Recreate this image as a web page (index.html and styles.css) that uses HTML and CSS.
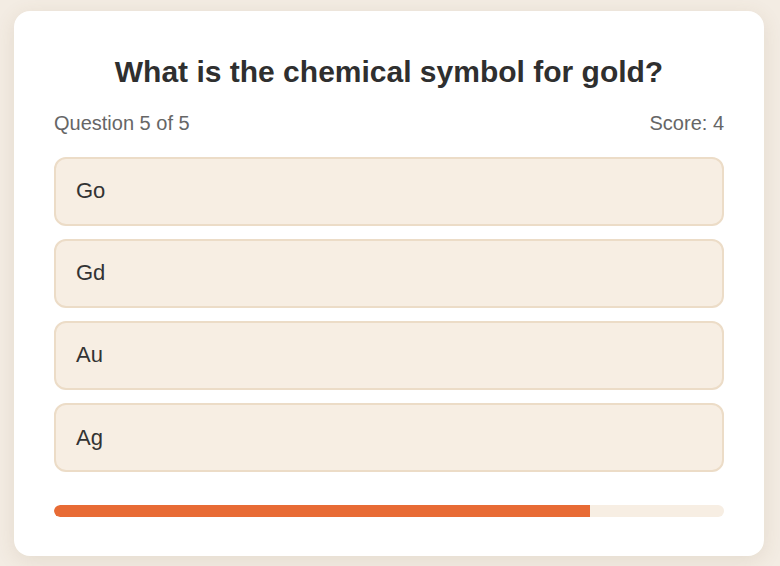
FILE: index.html
```html
<!DOCTYPE html>
<html lang="en">
<head>
<meta charset="utf-8">
<title>Quiz</title>
<link rel="stylesheet" href="styles.css">
</head>
<body>
<main class="card">
  <h1 class="question">What is the chemical symbol for gold?</h1>
  <div class="meta">
    <span>Question 5 of 5</span>
    <span>Score: 4</span>
  </div>
  <div class="options">
    <button class="option">Go</button>
    <button class="option">Gd</button>
    <button class="option">Au</button>
    <button class="option">Ag</button>
  </div>
  <div class="progress"><div class="progress-fill" style="width: 80%"></div></div>
</main>
</body>
</html>
```
FILE: styles.css
```css
* { box-sizing: border-box; }
body {
  margin: 0;
  background: #f3ece3;
  font-family: "Liberation Sans", Arial, sans-serif;
  color: #333;
  padding: 11px 16px 10px 14px;
}
.card {
  background: #fff;
  border-radius: 16px;
  box-shadow: 0 4px 20px rgba(120, 90, 50, 0.12);
  padding: 40px 40px 39.5px;
  width: 750px;
}
.question {
  margin: 3px 0 0;
  font-size: 30px;
  font-weight: bold;
  text-align: center;
  color: #2f2f2f;
  line-height: 36px;
}
.meta {
  display: flex;
  justify-content: space-between;
  font-size: 20px;
  color: #666;
  margin-top: 22px;
  line-height: 23px;
}
.options {
  display: flex;
  flex-direction: column;
  gap: 13.6px;
  margin-top: 22px;
}
.option {
  display: block;
  width: 100%;
  height: 68.5px;
  text-align: left;
  font-family: inherit;
  font-size: 22px;
  color: #333;
  line-height: 24px;
  padding: 20px;
  background: #f7eee3;
  border: 2px solid #ecdcc7;
  border-radius: 12px;
}
.progress {
  margin-top: 33px;
  height: 12px;
  background: #f7eee3;
  border-radius: 6px;
  overflow: hidden;
}
.progress-fill {
  height: 100%;
  background: #e86b35;
  border-radius: 6px 0 0 6px;
}
```
